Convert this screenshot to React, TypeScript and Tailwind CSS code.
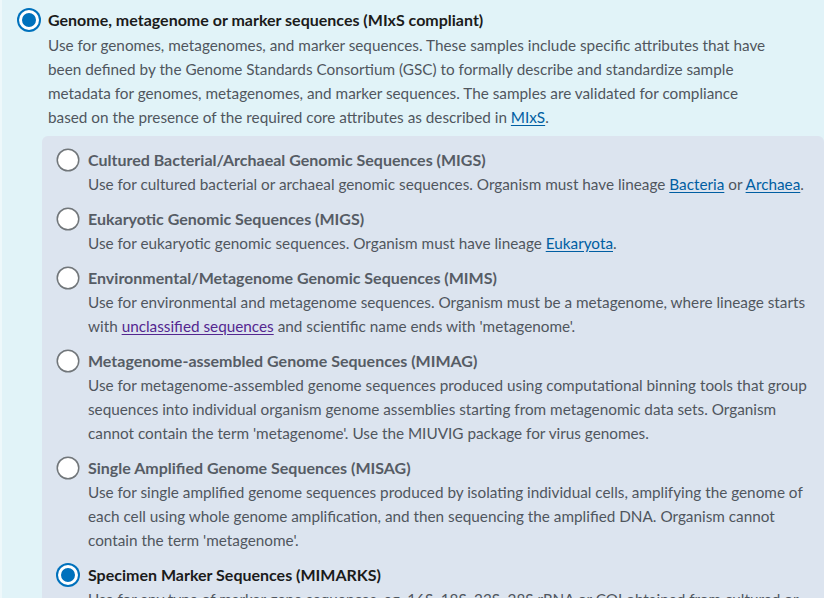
import React, { useState } from 'react';

type Pkg = {
  id: string;
  title: string;
  desc: React.ReactNode;
};

const linkCls = 'text-[#005ea2] underline underline-offset-2';
const visitedCls = 'text-[#54278f] underline underline-offset-2';

const PACKAGES: Pkg[] = [
  {
    id: 'migs-ba',
    title: 'Cultured Bacterial/Archaeal Genomic Sequences (MIGS)',
    desc: (
      <>
        Use for cultured bacterial or archaeal genomic sequences. Organism must have lineage{' '}
        <a href="#" className={linkCls}>Bacteria</a> or <a href="#" className={linkCls}>Archaea</a>.
      </>
    ),
  },
  {
    id: 'migs-eu',
    title: 'Eukaryotic Genomic Sequences (MIGS)',
    desc: (
      <>
        Use for eukaryotic genomic sequences. Organism must have lineage{' '}
        <a href="#" className={linkCls}>Eukaryota</a>.
      </>
    ),
  },
  {
    id: 'mims',
    title: 'Environmental/Metagenome Genomic Sequences (MIMS)',
    desc: (
      <>
        Use for environmental and metagenome sequences. Organism must be a metagenome, where lineage starts
        with <a href="#" className={visitedCls}>unclassified sequences</a> and scientific name ends with
        'metagenome'.
      </>
    ),
  },
  {
    id: 'mimag',
    title: 'Metagenome-assembled Genome Sequences (MIMAG)',
    desc: (
      <>
        Use for metagenome-assembled genome sequences produced using computational binning tools that group
        sequences into individual organism genome assemblies starting from metagenomic data sets. Organism
        cannot contain the term 'metagenome'. Use the MIUVIG package for virus genomes.
      </>
    ),
  },
  {
    id: 'misag',
    title: 'Single Amplified Genome Sequences (MISAG)',
    desc: (
      <>
        Use for single amplified genome sequences produced by isolating individual cells, amplifying the genome of
        each cell using whole genome amplification, and then sequencing the amplified DNA. Organism cannot
        contain the term 'metagenome'.
      </>
    ),
  },
  {
    id: 'mimarks',
    title: 'Specimen Marker Sequences (MIMARKS)',
    desc: (
      <>
        Use for any type of marker gene sequences, eg. 16S, 18S, 23S, 28S rRNA or COI obtained from cultured or
        voucher-identifiable specimens.
      </>
    ),
  },
];

function Radio({ checked }: { checked: boolean }) {
  return checked ? (
    <span className="mt-[2px] block h-5 w-5 shrink-0 rounded-full bg-[#0071bc] shadow-[0_0_0_2px_#0071bc,inset_0_0_0_3px_#ffffff]" />
  ) : (
    <span className="mt-[2px] block h-5 w-5 shrink-0 rounded-full bg-white shadow-[0_0_0_1.5px_#71767a]" />
  );
}

export default function App() {
  const [selected, setSelected] = useState('mimarks');

  return (
    <main
      className="min-h-screen border-l-2 border-[#eef8fb] bg-[#e1f3f8] pt-2 text-[#565c65]"
      style={{ fontFamily: 'Lato, "Noto Sans", sans-serif' }}
    >
      {/* MIxS group */}
      <label className="flex cursor-pointer items-start gap-[9px] pl-[17px] pr-[46px]">
        <Radio checked />
        <div>
          <div className="text-[16px] font-bold leading-6 text-[#1b1b1b]">
            Genome, metagenome or marker sequences (MIxS compliant)
          </div>
          <p className="mt-[1px] text-[15.3px] leading-6 text-[#50565e]">
            Use for genomes, metagenomes, and marker sequences. These samples include specific attributes that have
            been defined by the Genome Standards Consortium (GSC) to formally describe and standardize sample
            metadata for genomes, metagenomes, and marker sequences. The samples are validated for compliance
            based on the presence of the required core attributes as described in{' '}
            <a href="#" className={linkCls}>MIxS</a>.
          </p>
        </div>
      </label>

      {/* sub packages */}
      <div className="ml-[40px] mt-[7px] space-y-[11px] rounded-tl-md rounded-tr-md bg-[#dce4ef] pb-6 pl-4 pr-3 pt-3">
        {PACKAGES.map(p => {
          const on = selected === p.id;
          return (
            <label
              key={p.id}
              className="flex cursor-pointer items-start gap-[10px]"
              onClick={() => setSelected(p.id)}
            >
              <Radio checked={on} />
              <div>
                <div className={`text-[16px] font-bold leading-6 ${on ? 'text-[#1b1b1b]' : 'text-[#565c65]'}`}>
                  {p.title}
                </div>
                <p className="text-[15.3px] leading-6 text-[#50565e]">{p.desc}</p>
              </div>
            </label>
          );
        })}
      </div>
    </main>
  );
}
